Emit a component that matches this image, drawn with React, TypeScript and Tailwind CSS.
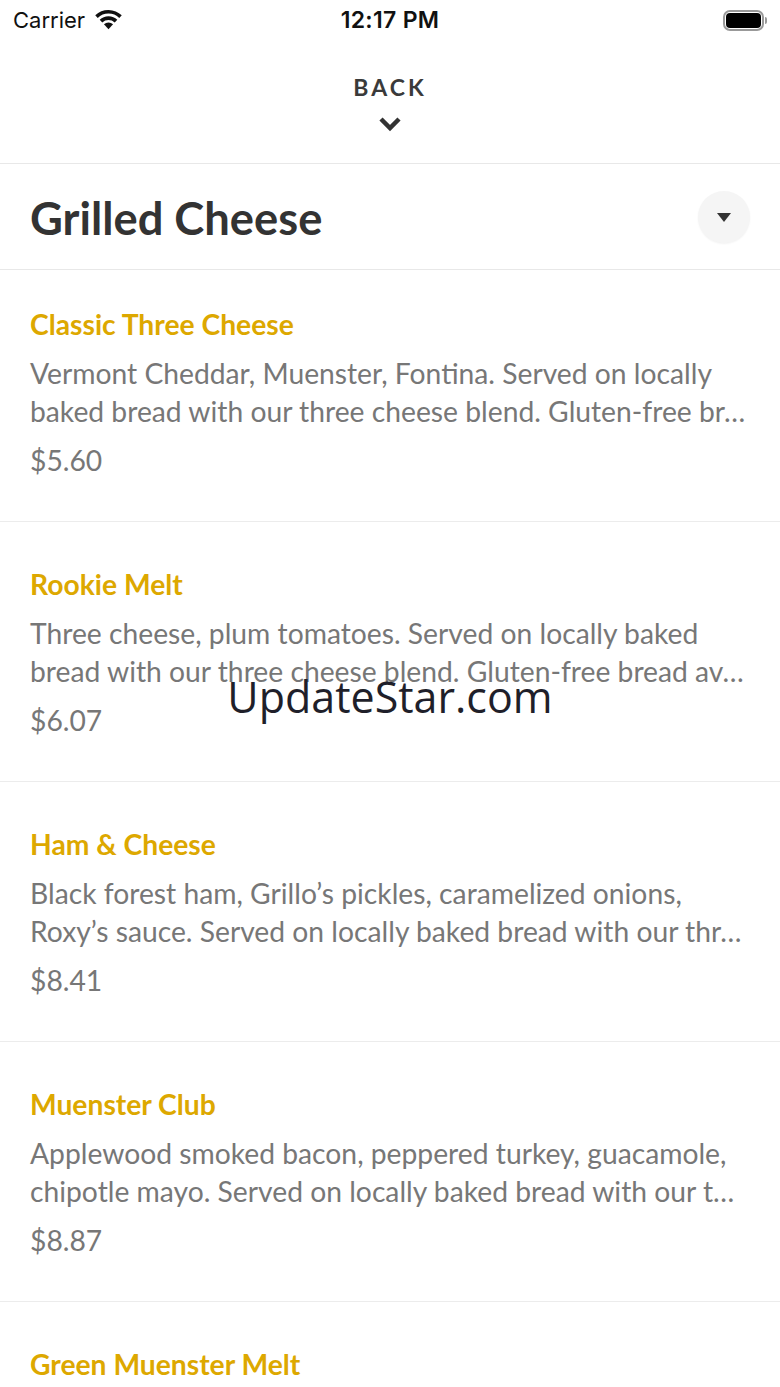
const items = [
  { name: "Classic Three Cheese", l1: "Vermont Cheddar, Muenster, Fontina. Served on locally", l2: "baked bread with our three cheese blend. Gluten-free br…", price: "$5.60" },
  { name: "Rookie Melt", l1: "Three cheese, plum tomatoes. Served on locally baked", l2: "bread with our three cheese blend. Gluten-free bread av…", price: "$6.07" },
  { name: "Ham & Cheese", l1: "Black forest ham, Grillo’s pickles, caramelized onions,", l2: "Roxy’s sauce. Served on locally baked bread with our thr…", price: "$8.41" },
  { name: "Muenster Club", l1: "Applewood smoked bacon, peppered turkey, guacamole,", l2: "chipotle mayo. Served on locally baked bread with our t…", price: "$8.87" },
];

function StatusBar() {
  return (
    <div className="relative flex h-[40px] items-center justify-between pl-[13px] pr-[11px] font-['Inter',sans-serif] text-[#111]">
      <div className="flex items-center gap-[9px]">
        <span className="text-[22px] leading-none">Carrier</span>
        <svg className="-mt-[2px]" width="29" height="21" viewBox="0 0 28 20" fill="currentColor">
          <path d="M14 19.5 9.6 14.6a6.4 6.4 0 0 1 8.8 0z" />
          <path d="M14 6.9c3.3 0 6.3 1.3 8.5 3.4l-2.5 2.6a8.8 8.8 0 0 0-12 0l-2.5-2.6A12.3 12.3 0 0 1 14 6.9z" />
          <path d="M14 .8c5 0 9.500 2 12.800 5.200l-2.400 2.500A15 15 0 0 0 14 4.300 15 15 0 0 0 3.600 8.500L1.200 6A18.400 18.400 0 0 1 14 .8z" />
        </svg>
      </div>
      <span className="absolute left-0 right-0 text-center text-[23px] font-semibold leading-none tracking-[0.3px]">12:17 PM</span>
      <div className="flex items-center gap-[1px]">
        <div className="flex h-[21px] w-[41px] items-center rounded-[7px] border-2 border-[#999] p-[1px]">
          <div className="h-full w-full rounded-[4px] bg-black" />
        </div>
        <div className="mr-[2px] h-[7px] w-[2px] rounded-r-[2px] bg-[#999]" />
      </div>
    </div>
  );
}

export default function App() {
  return (
    <div className="relative h-[1387px] w-[780px] overflow-hidden bg-white font-['Lato','Carlito',sans-serif]">
      <StatusBar />
      <div className="flex h-[124px] flex-col items-center border-b border-[#e8e8e8] pt-[33px]">
        <span className="text-[23px] font-bold leading-[28px] tracking-[3px] text-[#3a3a3a]">BACK</span>
        <svg className="mr-[1px] mt-[15px]" width="24" height="16" viewBox="0 0 24 16" fill="none" stroke="#333" strokeWidth="4.5">
          <path d="M3 3l9 9 9-9" />
        </svg>
      </div>
      <div className="flex h-[106px] items-center justify-between border-b border-[#e8e8e8] pl-[30px] pr-[30px]">
        <h1 className="mt-[3px] text-[45.300px] font-bold leading-none text-[#333]">Grilled Cheese</h1>
        <div className="flex h-[52px] w-[52px] items-center justify-center rounded-full bg-[#f5f5f5] shadow-[0_1px_2px_rgba(0,0,0,0.05)]">
          <div className="mt-[2px] h-0 w-0 border-x-[7px] border-t-[9px] border-x-transparent border-t-[#333]" />
        </div>
      </div>
      <div>
        {items.map((item) => (
          <div key={item.name} className="flex h-[260px] flex-col border-b border-[#ececec] pl-[30px] pt-[42px] first:h-[252px] first:pt-[34px]">
            <div className="text-[28.250px] font-bold leading-[40px] text-[#dda800]">{item.name}</div>
            <div className="mt-[10px] whitespace-nowrap text-[28.250px] leading-[38px] text-[#777777]">{item.l1}</div>
            <div className="whitespace-nowrap text-[28.250px] leading-[38px] text-[#777777]">{item.l2}</div>
            <div className="mt-[11px] text-[28.250px] leading-[38px] text-[#777777]">{item.price}</div>
          </div>
        ))}
      </div>
      <div className="pl-[30px] pt-[42px] text-[28.250px] font-bold leading-[40px] text-[#dda800]">Green Muenster Melt</div>
      <div className="absolute left-0 right-0 top-[669px] text-center font-['Open_Sans',sans-serif] text-[43px] leading-[56px] text-[#1f1f2a]">UpdateStar.com</div>
    </div>
  );
}
